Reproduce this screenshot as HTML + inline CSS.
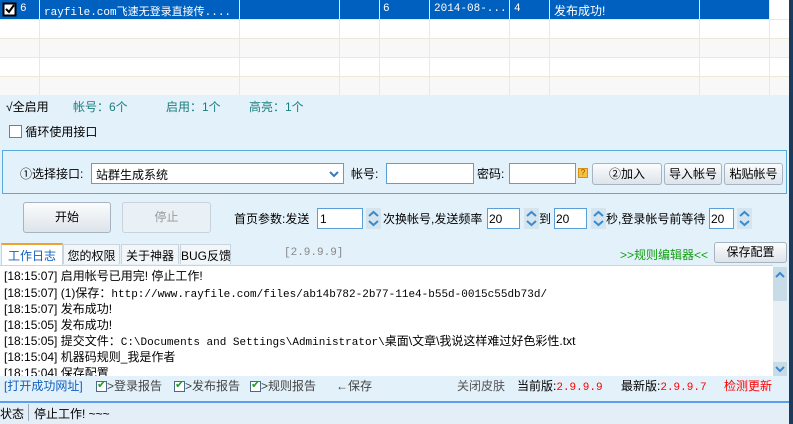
<!DOCTYPE html>
<html><head><meta charset="utf-8"><style>
*{margin:0;padding:0;box-sizing:border-box}
body{width:793px;height:424px;overflow:hidden;background:#e3f1fa;font-family:"Liberation Sans","Noto Sans CJK SC","WenQuanYi Zen Hei",sans-serif;font-size:12px;color:#000;position:relative}
.a{position:absolute;white-space:nowrap}
.m{font-family:"Liberation Mono","Noto Sans CJK SC",monospace;font-size:11px}
.btn{position:absolute;border:1px solid #a6b3c0;border-radius:3px;background:linear-gradient(#fbfcfd,#dde4ea);text-align:center;font-size:12px}
.inp{position:absolute;background:#fff;border:1px solid #5a9fd8}
.spin{position:absolute;width:15px;height:21px;background:#d5e5f0}
.tab{position:absolute;top:244px;height:20px;border:1px solid #c8d4de;border-bottom:none;background:#f2f6f9;padding-top:2px;text-align:center;white-space:nowrap;color:#000}
.cb{display:inline-block;width:11px;height:11px;border:1px solid #4a6a8a;background:#fff;vertical-align:-2px;position:relative}
.cb.k::after{content:"✔";position:absolute;left:0;top:-4px;color:#22a022;font-size:11px}
.ln{position:absolute;left:4px;white-space:nowrap;height:16px;line-height:16px}
</style></head><body>
<div class="a" style="left:0;top:0;width:789px;height:95px;background:#fff"></div>
<div class="a" style="left:0;top:38px;width:789px;height:19px;background:#f8f8f8"></div>
<div class="a" style="left:0;top:77px;width:789px;height:18px;background:#f8f8f8"></div>
<div class="a" style="left:0;top:0;width:769px;height:19px;background:#0060c0"></div>
<svg class="a" style="left:0;top:0" width="789" height="95">
<g stroke="#ece9d8" stroke-width="1">
<line x1="0" y1="19.5" x2="789" y2="19.5"/><line x1="0" y1="38.5" x2="789" y2="38.5"/><line x1="0" y1="57.5" x2="789" y2="57.5"/><line x1="0" y1="76.5" x2="789" y2="76.5"/>
<line x1="39.5" y1="0" x2="39.5" y2="95"/><line x1="239.5" y1="0" x2="239.5" y2="95"/><line x1="339.5" y1="0" x2="339.5" y2="95"/><line x1="379.5" y1="0" x2="379.5" y2="95"/><line x1="429.5" y1="0" x2="429.5" y2="95"/><line x1="509.5" y1="0" x2="509.5" y2="95"/><line x1="549.5" y1="0" x2="549.5" y2="95"/><line x1="699.5" y1="0" x2="699.5" y2="95"/><line x1="769.5" y1="0" x2="769.5" y2="95"/>
</g>
<rect x="3.5" y="3.5" width="12" height="12" fill="#fff" stroke="#000" stroke-width="2"/>
<path d="M6 9 l3 3 l5 -7" stroke="#000" stroke-width="2" fill="none"/>
</svg>
<div class="a" style="left:789px;top:0;width:4px;height:424px;background:#1b3a5c"></div>
<div class="a m" style="left:20px;top:3px;color:#fff">6</div>
<div class="a m" style="left:44px;top:3px;color:#fff">rayfile.com飞速无登录直接传....</div>
<div class="a m" style="left:383px;top:3px;color:#fff">6</div>
<div class="a m" style="left:434px;top:3px;color:#fff">2014-08-...</div>
<div class="a m" style="left:514px;top:3px;color:#fff">4</div>
<div class="a" style="left:554px;top:2px;color:#fff">发布成功!</div>
<div class="a" style="left:6px;top:98px">√全启用</div>
<div class="a" style="left:73px;top:98px;color:#1a7f7f">帐号：6个</div>
<div class="a" style="left:166px;top:98px;color:#1a7f7f">启用：1个</div>
<div class="a" style="left:249px;top:98px;color:#1a7f7f">高亮：1个</div>
<div class="a" style="left:9px;top:123px"><span class="cb" style="width:13px;height:13px;border-color:#4a86c8"></span> 循环使用接口</div>
<div class="a" style="left:2px;top:150px;width:785px;height:44px;border:1px solid #5aa9dc"></div>
<div class="a" style="left:20px;top:165px">①选择接口:</div>
<div class="inp" style="left:91px;top:163px;width:253px;height:21px"><span class="a" style="left:4px;top:2px">站群生成系统</span>
<svg class="a" style="right:4px;top:6px" width="10" height="8"><path d="M1 2 L5 6 L9 2" stroke="#3a7ac0" stroke-width="2" fill="none"/></svg></div>
<div class="a" style="left:351px;top:165px">帐号:</div>
<div class="inp" style="left:386px;top:163px;width:88px;height:21px"></div>
<div class="a" style="left:477px;top:165px">密码:</div>
<div class="inp" style="left:509px;top:163px;width:67px;height:21px"></div>
<div class="a" style="left:578px;top:168px;width:10px;height:10px;background:#f6c040;border:1px solid #d89010;font-size:8px;line-height:8px;text-align:center;color:#a05000">?</div>
<div class="btn" style="left:592px;top:163px;width:70px;height:22px;line-height:20px">②加入</div>
<div class="btn" style="left:664px;top:163px;width:58px;height:22px;line-height:20px">导入帐号</div>
<div class="btn" style="left:724px;top:163px;width:59px;height:22px;line-height:20px">粘贴帐号</div>
<div class="btn" style="left:23px;top:202px;width:88px;height:31px;line-height:29px">开始</div>
<div class="btn" style="left:122px;top:202px;width:89px;height:31px;line-height:29px;color:#999;background:#e9f1f6;border-color:#c8d2da">停止</div>
<div class="a" style="left:234px;top:210px">首页参数:发送</div>
<div class="inp" style="left:317px;top:208px;width:46px;height:21px"><span class="a" style="left:2px;top:3px">1</span></div>
<div class="a" style="left:383px;top:210px">次换帐号,发送频率</div>
<div class="inp" style="left:487px;top:208px;width:33px;height:21px"><span class="a" style="left:1px;top:3px">20</span></div>
<div class="a" style="left:539px;top:210px">到</div>
<div class="inp" style="left:554px;top:208px;width:33px;height:21px"><span class="a" style="left:1px;top:3px">20</span></div>
<div class="a" style="left:606px;top:210px">秒,登录帐号前等待</div>
<div class="inp" style="left:709px;top:208px;width:25px;height:21px"><span class="a" style="left:1px;top:3px">20</span></div>
<svg class="a" style="left:0;top:208px" width="793" height="22">
<g fill="#d5e5f0"><rect x="366" y="0" width="15" height="21"/><rect x="524" y="0" width="15" height="21"/><rect x="591" y="0" width="15" height="21"/><rect x="737" y="0" width="15" height="21"/></g>
<g stroke="#3a8ad0" stroke-width="2" fill="none">
<path d="M369 8 L373.5 4 L378 8 M369 13 L373.5 17 L378 13"/>
<path d="M527 8 L531.5 4 L536 8 M527 13 L531.5 17 L536 13"/>
<path d="M594 8 L598.5 4 L603 8 M594 13 L598.5 17 L603 13"/>
<path d="M740 8 L744.5 4 L749 8 M740 13 L744.5 17 L749 13"/>
</g></svg>
<div class="tab" style="left:1px;top:243px;width:62px;height:22px;background:#fff;color:#1060c0;border-top:2px solid #f0a030">工作日志</div>
<div class="tab" style="left:63px;width:57px">您的权限</div>
<div class="tab" style="left:121px;width:58px">关于神器</div>
<div class="tab" style="left:180px;width:51px">BUG反馈</div>
<div class="a m" style="left:284px;top:247px;color:#888">[2.9.9.9]</div>
<div class="a" style="left:620px;top:246px;color:#10a010">&gt;&gt;规则编辑器&lt;&lt;</div>
<div class="btn" style="left:714px;top:242px;width:73px;height:21px;line-height:19px">保存配置</div>
<div class="a" style="left:0;top:265px;width:773px;height:111px;background:#fff;border-top:1px solid #c8d4de;overflow:hidden">
<div class="ln" style="top:2px">[18:15:07] 启用帐号已用完! 停止工作!</div>
<div class="ln" style="top:19px">[18:15:07] (1)保存：<span class="m">http://www.rayfile.com/files/ab14b782-2b77-11e4-b55d-0015c55db73d/</span></div>
<div class="ln" style="top:35px">[18:15:07] 发布成功!</div>
<div class="ln" style="top:51px">[18:15:05] 发布成功!</div>
<div class="ln" style="top:67px">[18:15:05] 提交文件：<span class="m">C:\Documents and Settings\Administrator\</span>桌面\文章\我说这样难过好色彩性.txt</div>
<div class="ln" style="top:83px">[18:15:04] 机器码规则_我是作者</div>
<div class="ln" style="top:99px">[18:15:04] 保存配置</div>
</div>
<div class="a" style="left:773px;top:265px;width:14px;height:111px;background:#e8f0f5"></div>
<div class="a" style="left:773px;top:267px;width:14px;height:34px;background:#c8dce8"></div>
<div class="a" style="left:773px;top:362px;width:14px;height:14px;background:#c8dce8"></div>
<svg class="a" style="left:773px;top:267px" width="14" height="110"><g stroke="#3a8ad0" stroke-width="2" fill="none"><path d="M3 10 L7 6 L11 10"/><path d="M3 100 L7 104 L11 100"/></g></svg>
<div class="a" style="left:0;top:376px;width:789px;height:25px;background:#e3f1fa"></div>
<div class="a" style="left:4px;top:377px;color:#1060c0">[打开成功网址]</div>
<div class="a" style="left:96px;top:377px;color:#444"><span class="cb k"></span>&gt;登录报告</div>
<div class="a" style="left:174px;top:377px;color:#444"><span class="cb k"></span>&gt;发布报告</div>
<div class="a" style="left:250px;top:377px;color:#444"><span class="cb k"></span>&gt;规则报告</div>
<div class="a" style="left:336px;top:377px;color:#444">←保存</div>
<div class="a" style="left:457px;top:377px;color:#555">关闭皮肤</div>
<div class="a" style="left:517px;top:377px">当前版:<span class="m" style="color:#f00">2.9.9.9</span></div>
<div class="a" style="left:621px;top:377px">最新版:<span class="m" style="color:#f00">2.9.9.7</span></div>
<div class="a" style="left:724px;top:377px;color:#f00">检测更新</div>
<div class="a" style="left:0;top:401px;width:789px;height:2px;background:#5a9ff0"></div>
<div class="a" style="left:0;top:403px;width:789px;height:21px;background:#e3eef6"></div>
<div class="a" style="left:0;top:405px">状态</div>
<div class="a" style="left:28px;top:404px;width:1px;height:17px;background:#9ab"></div>
<div class="a" style="left:34px;top:405px">停止工作! ~~~</div>
</body></html>
